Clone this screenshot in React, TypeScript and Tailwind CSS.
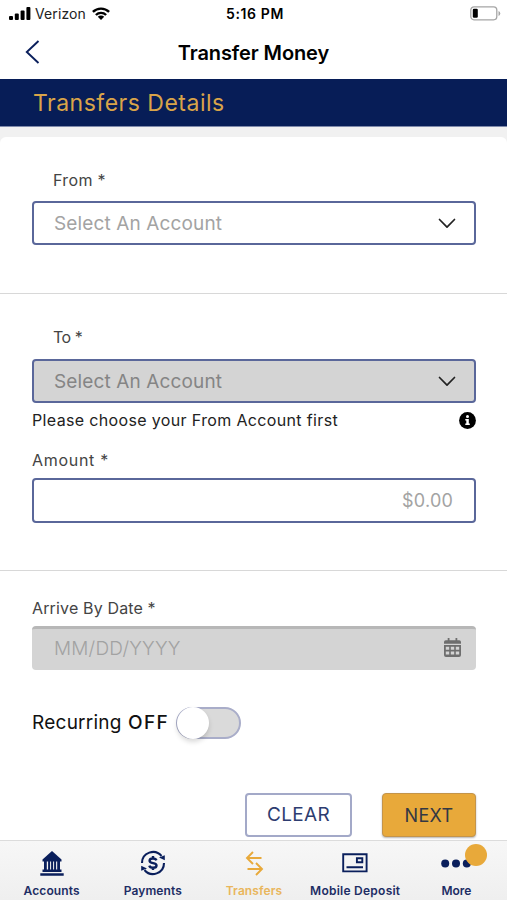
import React from "react";

function Signal() {
  return (
    <svg width="22" height="13" viewBox="0 0 22 13" fill="#000">
      <rect x="0" y="9" width="4" height="4" rx="1" />
      <rect x="5.8" y="6.5" width="4" height="6.5" rx="1" />
      <rect x="11.6" y="3.5" width="4" height="9.5" rx="1" />
      <rect x="17.4" y="0" width="4" height="13" rx="1" />
    </svg>
  );
}

function Wifi() {
  return (
    <svg width="18" height="13" viewBox="0 0 18 13" fill="none" stroke="#000" strokeWidth="2.4">
      <path d="M.9 4.9a11.6 11.6 0 0 1 16.2 0" />
      <path d="M3.9 8a7.3 7.3 0 0 1 10.2 0" />
      <path d="M9 13 5.8 9.8a4.6 4.6 0 0 1 6.4 0z" fill="#000" stroke="none" />
    </svg>
  );
}

function Battery() {
  return (
    <svg width="31" height="15" viewBox="0 0 31 15">
      <rect x=".8" y=".8" width="26" height="13" rx="3.2" fill="#fff" stroke="#a5a5a5" strokeWidth="1.3" />
      <rect x="2.8" y="2.8" width="5" height="9" rx="1.2" fill="#000" />
      <path d="M28.5 5v5q1.8-.8 1.8-2.5T28.5 5z" fill="#a5a5a5" />
    </svg>
  );
}

function Chevron() {
  return (
    <svg width="18" height="11" viewBox="0 0 18 11" fill="none" stroke="#222" strokeWidth="1.7" strokeLinecap="round" strokeLinejoin="round">
      <path d="m1.5 1.5 7.5 7.7 7.5-7.7" />
    </svg>
  );
}

function Info() {
  return (
    <svg width="17" height="17" viewBox="0 0 17 17">
      <circle cx="8.5" cy="8.5" r="8.4" fill="#000" />
      <circle cx="8.5" cy="4.6" r="1.5" fill="#fff" />
      <path d="M6.3 6.9h3.5v4.6h1v1.6H6.3v-1.6h1V8.5h-1z" fill="#fff" />
    </svg>
  );
}

function Calendar() {
  return (
    <svg className="-mt-[4px]" width="17" height="19" viewBox="0 0 17 19" fill="#6e6e6e">
      <path d="M3.7 0h1.8v2.2h6V0h1.8v2.2h1.9Q17 2.2 17 4v1.8H0V4q0-1.8 1.8-1.8h1.9z" />
      <path fillRule="evenodd" d="M0 7h17v10q0 2-2 2H2q-2 0-2-2zM1.8 8.8v2.9h3.4V8.8zm5 0v2.9h3.4V8.8zm5 0v2.9h3.4V8.8zM1.8 13.4v3.2h3.4v-3.2zm5 0v3.2h3.4v-3.2zm5 0v3.2h3.4v-3.2z" />
    </svg>
  );
}

function Bank() {
  return (
    <svg width="24" height="25" viewBox="0 0 24 25" fill="#0a1f5c">
      <path d="M12 0 21.5 8.5V10.5H2.5V8.5z" />
      <path d="M4 10h2.800v9H4zM8.100 10h2v9h-2zM11.100 10h2v9h-2zM14.100 10h2v9h-2zM17.200 10H20v9h-2.800z" />
      <path d="M2.5 18.5h19V21h-19zM.3 22.2h23.400v2.500H.3z" />
    </svg>
  );
}

function Payments() {
  return (
    <svg width="26" height="26" viewBox="0 0 26 26">
      <g fill="none" stroke="#0a1f5c" strokeWidth="2.100">
        <path d="M2 13A11 11 0 0 1 21.500 6" />
        <path d="M24 13A11 11 0 0 1 4.500 20" />
      </g>
      <path d="M24.800 5.200v5l-5.800-2.800zM1.200 20.800v-5L7 18.600z" fill="#0a1f5c" />
      <path d="M16.400 10.300C15.900 8.900 14.600 8.500 13 8.500c-2 0-3.400.7-3.400 2.200 0 3.300 6.900 1.500 6.900 4.700 0 1.600-1.500 2.300-3.500 2.300-1.800 0-3.300-.6-3.700-2.100M13 6v3M13 17v3" fill="none" stroke="#0a1f5c" strokeWidth="2.400" />
    </svg>
  );
}

function Transfers() {
  return (
    <svg width="19" height="25" viewBox="0 0 19 25" fill="none" stroke="#e8a93a" strokeWidth="1.9">
      <path d="M16.5 7H2M8 1 2 7l6 6M2.5 18H17M11 12l6 6-6 6" />
    </svg>
  );
}

function Deposit() {
  return (
    <svg width="26" height="20" viewBox="0 0 26 20" fill="none" stroke="#0a1f5c" strokeWidth="1.9">
      <path d="M1.2 1.2h23.400v17.200H1.200z" />
      <path d="M14.900 5.200h5.400v4h-5.400zM4.500 14.200H21" />
    </svg>
  );
}

function More() {
  return (
    <svg width="30" height="9" viewBox="0 0 30 9" fill="#0a1f5c">
      <circle cx="4.2" cy="4.5" r="4" />
      <circle cx="15" cy="4.5" r="4" />
      <circle cx="25.8" cy="4.5" r="4" />
    </svg>
  );
}

function Tab({ icon, label, labelClass, badge }: { icon: React.ReactNode; label: string; labelClass: string; badge?: boolean }) {
  return (
    <div className="relative flex flex-1 flex-col items-center">
      <div className="flex h-[43px] items-center justify-center pt-px">{icon}</div>
      <span className={"text-[12px] leading-[14px] font-semibold whitespace-nowrap " + labelClass}>{label}</span>
      {badge && <span className="absolute top-[3px] left-[59px] size-[22px] rounded-full bg-[#e8a93a]" />}
    </div>
  );
}

export default function App() {
  return (
    <div className="flex h-[900px] w-[507px] flex-col overflow-hidden bg-white font-['Inter',sans-serif] text-[#222]">
      <header className="h-[79px] text-black">
        <div className="grid h-[27px] grid-cols-3 items-center pr-[6px] pl-[9px]">
          <div className="flex items-center">
            <Signal />
            <span className="mr-[6px] ml-[4px] text-[14px] tracking-[0.1px] text-[#222]">Verizon</span>
            <Wifi />
          </div>
          <span className="text-center text-[14px] font-semibold tracking-[0.6px]">5:16 PM</span>
          <div className="flex justify-end"><Battery /></div>
        </div>
        <div className="grid h-[50px] grid-cols-[100px_1fr_100px] items-center">
          <svg className="ml-[25px]" width="15" height="24" viewBox="0 0 15 24" fill="none" stroke="#0a1f5c" strokeWidth="1.9">
            <path d="M13.5 1 1.8 12l11.700 11" />
          </svg>
          <h1 className="pt-px text-center text-[20px] font-semibold tracking-[-0.1px]">Transfer Money</h1>
        </div>
      </header>

      <div className="flex h-[48px] shrink-0 items-center border-b border-[#7f8aab] bg-[#071d57] pt-[2px] pl-[33px]">
        <h2 className="text-[23px] tracking-[0.5px] text-[#d9a449]">Transfers Details</h2>
      </div>

      <div className="min-h-0 flex-1 bg-[#f1f1f1] pt-[10px]">
        <main className="h-full rounded-t-[6px] bg-white">
          <section className="h-[157px] border-b border-[#d8d8d8] pt-[32px] pr-[31px] pl-[32px]">
            <label className="block pl-[21px] text-[16px] leading-[22px] tracking-[0.35px] text-[#444]">From *</label>
            <div className="mt-[10px] flex h-[44px] items-center justify-between rounded-[4px] border-2 border-[#5a679a] pr-[18px] pl-[20px]">
              <span className="pt-[2px] text-[19px] tracking-[0.13px] text-[#a3a3a3]">Select An Account</span>
              <Chevron />
            </div>
          </section>

          <section className="h-[277px] border-b border-[#d8d8d8] pt-[32px] pr-[31px] pl-[32px]">
            <label className="block pl-[21px] text-[16px] leading-[22px] text-[#444]"><span className="tracking-[-0.5px]">To *</span></label>
            <div className="mt-[11px] flex h-[44px] items-center justify-between rounded-[4px] border-2 border-[#5a679a] bg-[#d4d4d4] pr-[18px] pl-[20px]">
              <span className="pt-[2px] text-[19px] tracking-[0.13px] text-[#858585]">Select An Account</span>
              <Chevron />
            </div>
            <div className="flex h-[34px] items-center justify-between">
              <span className="text-[16px] tracking-[0.35px]">Please choose your From Account first</span>
              <Info />
            </div>
            <label className="mt-[12px] block text-[16px] leading-[22px] tracking-[0.7px] text-[#444]">Amount *</label>
            <div className="mt-[7px] flex h-[45px] items-center justify-end rounded-[4px] border-2 border-[#5a679a] pr-[21px]">
              <span className="text-[18px] tracking-[0.2px] text-[#a3a3a3]">$0.00</span>
            </div>
          </section>

          <section className="pt-[26px] pr-[31px] pl-[32px]">
            <label className="block text-[16px] leading-[22px] tracking-[0.15px] text-[#444]">Arrive By Date *</label>
            <div className="mt-[7px] flex h-[44px] items-center justify-between rounded-[4px] border-t-[3px] border-[#b7b7b7] bg-[#d4d4d4] pr-[15px] pl-[22px]">
              <span className="text-[19px] font-light tracking-[0.2px] text-[#a2a2a2]">MM/DD/YYYY</span>
              <Calendar />
            </div>
            <div className="mt-[37px] flex h-[32px] items-center">
              <span className="w-[91px] pt-px text-[19px] tracking-[0.25px] text-[#111]">Recurring</span>
              <span className="ml-[5px] w-[43px] pt-px text-[19px] font-medium tracking-[1.4px] text-[#111]">OFF</span>
              <div className="ml-[5px] h-[32px] w-[65px] rounded-full border-2 border-[#a9adc9] bg-[#dadada]">
                <div className="-mt-[2px] -ml-px size-[32px] rounded-full bg-white shadow-[0_3px_5px_rgba(0,0,0,0.15)]" />
              </div>
            </div>
            <div className="mt-[54px] flex justify-end gap-[30px]">
              <button className="h-[44px] w-[107px] rounded-[4px] border-2 border-[#a3a9c8] text-[19px] tracking-[0.3px] text-[#2d3c70]">CLEAR</button>
              <button className="h-[44px] w-[94px] rounded-[4px] border border-[#c4944a] bg-[#e8a93a] text-[18px] tracking-[0.3px] text-[#333844] shadow-[0_1px_2px_rgba(0,0,0,0.3)]">NEXT</button>
            </div>
          </section>
        </main>
      </div>

      <nav className="flex h-[60px] shrink-0 border-t border-[#dcdcdc] bg-gradient-to-b from-[#f7f7f7] to-[#efefef] pl-px">
        <Tab icon={<Bank />} label="Accounts" labelClass="text-[#1d2d64] tracking-[0.1px]" />
        <Tab icon={<Payments />} label="Payments" labelClass="text-[#1d2d64] tracking-[0.1px]" />
        <Tab icon={<Transfers />} label="Transfers" labelClass="text-[#e9b65c] tracking-[0.1px]" />
        <Tab icon={<Deposit />} label="Mobile Deposit" labelClass="text-[#1d2d64] tracking-[0.25px]" />
        <Tab icon={<More />} label="More" labelClass="text-[#1d2d64]" badge />
      </nav>
    </div>
  );
}
